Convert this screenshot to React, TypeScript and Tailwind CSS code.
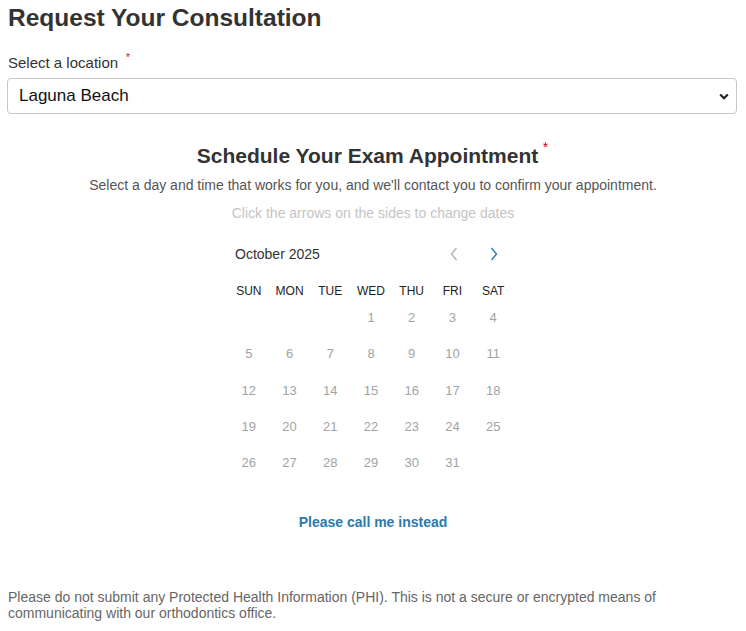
import React from "react";

const days = ["SUN", "MON", "TUE", "WED", "THU", "FRI", "SAT"];

export default function App() {
  const cells: (number | null)[] = [null, null, null];
  for (let i = 1; i <= 31; i++) cells.push(i);
  while (cells.length % 7) cells.push(null);
  const rows: (number | null)[][] = [];
  for (let i = 0; i < cells.length; i += 7) rows.push(cells.slice(i, i + 7));

  return (
    <div className="bg-white w-[746px] min-h-[631px] px-[8px] text-[#333]" style={{ fontFamily: '"Liberation Sans", Arial, Helvetica, sans-serif' }}>
      <h1 className="pt-[4px] text-[24.5px] leading-[28px] font-bold text-[#333]">Request Your Consultation</h1>
      <div className="mt-[22px] text-[15px] leading-[18px] text-[#333] flex">
        <span>Select a location</span>
        <span className="text-[#d0021b] text-[10px] leading-[10px] ml-[8px] -mt-[1px]">*</span>
      </div>
      <div className="relative mt-[6px] -ml-[1px] w-[730px] h-[36px] border border-[#c8c8c8] rounded-[4px] flex items-center pl-[11px] text-[17px] text-[#111]">
        Laguna Beach
        <svg className="absolute right-[7px] top-[14px]" width="10" height="7" viewBox="0 0 10 7">
          <polyline points="1.2,1.5 5,5.2 8.8,1.5" fill="none" stroke="#222" strokeWidth="2.2" />
        </svg>
      </div>

      <div className="mt-[30px] flex justify-center pr-[11px]">
        <h2 className="text-[21px] leading-[24px] font-bold text-[#333] relative">
          Schedule Your Exam Appointment
          <span className="absolute -right-[10px] -top-[4px] text-[#d0021b] text-[14px] leading-[14px] font-normal">*</span>
        </h2>
      </div>
      <p className="mt-[8px] text-center text-[14px] leading-[18px] text-[#555]">
        Select a day and time that works for you, and we'll contact you to confirm your appointment.
      </p>
      <p className="mt-[10px] text-center text-[14px] leading-[18px] text-[#c4c4c4]">
        Click the arrows on the sides to change dates
      </p>

      <div className="w-[285px] ml-[220.5px] mt-[22px]">
        <div className="flex items-center justify-between h-[20px]">
          <span className="pl-[6.5px] text-[14px] text-[#333]">October 2025</span>
          <div className="flex">
            <div className="w-[40px] flex justify-center">
              <svg width="8" height="14" viewBox="0 0 8 14">
                <polyline points="6.5,1 1.5,7 6.5,13" fill="none" stroke="#aaa" strokeWidth="1.2" />
              </svg>
            </div>
            <div className="w-[40px] flex justify-center">
              <svg width="8" height="14" viewBox="0 0 8 14">
                <polyline points="1.5,1 6.5,7 1.5,13" fill="none" stroke="#2a7ab8" strokeWidth="1.4" />
              </svg>
            </div>
          </div>
        </div>
        <div className="grid grid-cols-7 mt-[19px]">
          {days.map((d) => (
            <div key={d} className="text-center text-[12px] leading-[16px] text-[#222]">{d}</div>
          ))}
        </div>
        <div className="pt-[1px]">
          {rows.map((r, i) => (
            <div key={i} className="grid grid-cols-7 h-[36.25px] items-center">
              {r.map((c, j) => (
                <div key={j} className="text-center text-[13px] leading-[16px] text-[#a3a3a3]">{c ?? ""}</div>
              ))}
            </div>
          ))}
        </div>
      </div>

      <p className="mt-[32px] text-center text-[14px] leading-[18px] font-bold text-[#2a7ab0]">Please call me instead</p>

      <p className="mt-[58px] text-[14px] leading-[16px] text-[#666] pr-[80px]">
        Please do not submit any Protected Health Information (PHI). This is not a secure or encrypted means of communicating with our orthodontics office.
      </p>
    </div>
  );
}
